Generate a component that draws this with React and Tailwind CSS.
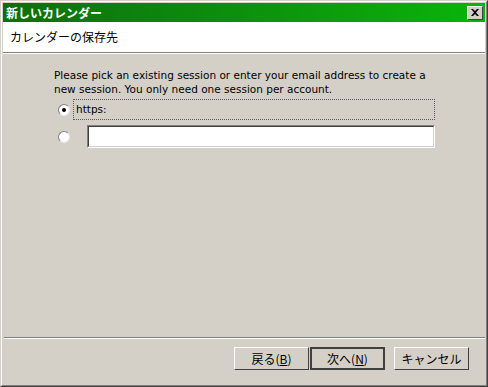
export default function App() {
  const jp = { fontFamily: '"Noto Sans CJK JP", "DejaVu Sans", sans-serif' };
  const en = { fontFamily: '"DejaVu Sans", "Liberation Sans", sans-serif' };

  return (
    <div className="w-[488px] h-[387px] bg-[#d4d0c8] overflow-hidden">
      {/* window frame */}
      <div className="w-full h-full border border-l-[#d4d0c8] border-t-[#d4d0c8] border-r-[#404040] border-b-[#404040]">
        <div className="w-full h-full flex flex-col p-[1px] border border-l-white border-t-white border-r-[#808080] border-b-[#808080]">
          {/* title bar */}
          <div className="h-[19px] flex items-center justify-between pl-[3px] pr-[2px] bg-gradient-to-r from-[#0c6f0c] to-[#0ab40a]">
            <span className="text-white text-[12px] font-bold leading-none" style={jp}>新しいカレンダー</span>
            <div className="w-[16px] h-[14px] bg-[#d4d0c8] border border-l-white border-t-white border-r-[#404040] border-b-[#404040] flex items-center justify-center">
              <svg width="8" height="7" viewBox="0 0 8 7">
                <path d="M0 0h2l2 2 2-2h2L5 3.5 8 7H6L4 5 2 7H0l3-3.5z" fill="#000" />
              </svg>
            </div>
          </div>

          {/* header */}
          <div className="h-[31px] bg-white flex items-center pl-[7px] border-b border-b-[#808080]">
            <span className="text-[12px] text-black" style={jp}>カレンダーの保存先</span>
          </div>
          <div className="h-px bg-white" />

          {/* body */}
          <div className="flex-1 flex flex-col">
            <div className="pl-[51px] pr-[50px] pt-[14px]">
              <p className="text-[10.5px] leading-[14px] text-black" style={en}>
                Please pick an existing session or enter your email address to create a new session. You only need one session per account.
              </p>

              <div className="mt-[3px] flex items-center h-[21px]">
                <div className="ml-[4px] w-[12px] h-[12px] rounded-full bg-white border border-t-[#808080] border-l-[#808080] border-r-[#e6e6e6] border-b-[#e6e6e6] flex items-center justify-center">
                  <div className="w-[4px] h-[4px] rounded-full bg-black" />
                </div>
                <div className="ml-[3px] flex-1 h-[21px] border border-dotted border-[#5a5a5a] flex items-center pl-[2px]">
                  <span className="text-[10.5px] text-black" style={en}>https:</span>
                </div>
              </div>

              <div className="mt-[5px] flex items-center h-[23px]">
                <div className="ml-[4px] w-[12px] h-[12px] rounded-full bg-white border border-t-[#808080] border-l-[#808080] border-r-[#e6e6e6] border-b-[#e6e6e6]" />
                <div className="ml-[17px] flex-1 h-[23px] border border-t-[#808080] border-l-[#808080] border-r-white border-b-white">
                  <div className="w-full h-full bg-white border border-t-[#404040] border-l-[#404040] border-r-[#d4d0c8] border-b-[#d4d0c8]" />
                </div>
              </div>
            </div>

            <div className="flex-1" />

            {/* separator */}
            <div className="h-px bg-[#808080] ml-[1px]" />
            <div className="h-px bg-white ml-[1px]" />

            {/* buttons */}
            <div className="h-[45px] flex items-start justify-end pt-[8px] pr-[16px]">
              <button className="w-[75px] h-[23px] bg-[#d4d0c8] border border-l-white border-t-white border-r-[#404040] border-b-[#404040] text-[12px] text-black" style={jp}>
                戻る(<span className="underline">B</span>)
              </button>
              <button className="ml-[1px] w-[75px] h-[23px] bg-[#d4d0c8] border-2 border-[#404040] text-[12px] text-black" style={jp}>
                次へ(<span className="underline">N</span>)
              </button>
              <button className="ml-[9px] w-[75px] h-[23px] bg-[#d4d0c8] border border-l-white border-t-white border-r-[#404040] border-b-[#404040] text-[12px] text-black" style={jp}>
                キャンセル
              </button>
            </div>
          </div>
        </div>
      </div>
    </div>
  );
}
